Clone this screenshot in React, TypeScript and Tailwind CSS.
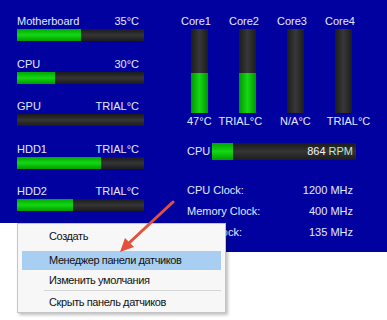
import React from 'react'

const font = { fontFamily: '"Liberation Sans", Arial, sans-serif' }

const sensors = [
  { label: 'Motherboard', value: '35°C', fill: 64 },
  { label: 'CPU', value: '30°C', fill: 38 },
  { label: 'GPU', value: 'TRIAL°C', fill: 0 },
  { label: 'HDD1', value: 'TRIAL°C', fill: 84 },
  { label: 'HDD2', value: 'TRIAL°C', fill: 56 },
]

const cores = [
  { label: 'Core1', fill: 40 },
  { label: 'Core2', fill: 40 },
  { label: 'Core3', fill: 0 },
  { label: 'Core4', fill: 0 },
]

const clocks = [
  { label: 'CPU Clock:', value: '1200 MHz' },
  { label: 'Memory Clock:', value: '400 MHz' },
  { label: 'FSB Clock:', value: '135 MHz' },
]

function HBar({ fill, className }: { fill: number; className: string }) {
  return (
    <div className={`relative bg-gradient-to-b from-[#1a1a1a] via-[#353535] to-[#1c1c1c] ${className}`}>
      {fill > 0 && (
        <div className="absolute left-0 top-0 h-full bg-gradient-to-b from-[#00a800] via-[#14d814] to-[#009a00]"
          style={{ width: fill }} />
      )}
    </div>
  )
}

export default function App() {
  return (
    <div className="relative w-[387px] h-[320px] bg-white overflow-hidden" style={font}>
      {/* gadget panel */}
      <div className="h-[252px] bg-[#0101a0] flex pl-[17px] pt-[14px] text-[11px] text-[#e2eaff]">
        <div className="w-[127px] flex flex-col gap-[15.5px]">
          {sensors.map(s => (
            <div key={s.label}>
              <div className="flex justify-between h-[14px] leading-[14px] pr-[5px]">
                <span>{s.label}</span>
                <span>{s.value}</span>
              </div>
              <HBar fill={s.fill} className="mt-[1px] h-[12px] w-[127px]" />
            </div>
          ))}
        </div>

        <div className="ml-[30px] w-[192px]">
          <div className="grid grid-cols-4">
            {cores.map(c => (
              <div key={c.label} className="flex flex-col items-center">
                <span className="h-[14px] leading-[14px] -ml-[4px]">{c.label}</span>
                <div className="relative mt-[1px] ml-[3px] w-[17px] h-[84px] bg-gradient-to-r from-[#1c1c1c] via-[#383838] to-[#1c1c1c]">
                  {c.fill > 0 && (
                    <div className="absolute bottom-0 left-0 w-full bg-gradient-to-r from-[#009800] via-[#16d816] to-[#009800]"
                      style={{ height: c.fill }} />
                  )}
                </div>
              </div>
            ))}
          </div>
          <div className="flex h-[14px] leading-[14px] mt-[1px] pl-[13px]">
            <span>47°C</span>
            <span className="ml-[7px]">TRIAL°C</span>
            <span className="ml-[18px]">N/A°C</span>
            <span className="ml-[16px]">TRIAL°C</span>
          </div>

          <div className="flex items-center mt-[15px] pl-[13px] h-[17px]">
            <span className="w-[25px]">CPU</span>
            <div className="relative w-[144px] h-[17px] bg-gradient-to-b from-[#1a1a1a] via-[#353535] to-[#1c1c1c]">
              <div className="absolute left-0 top-0 h-full w-[21px] bg-gradient-to-b from-[#00a800] via-[#14d814] to-[#009a00]" />
              <div className="absolute right-[3px] top-0 h-full flex items-center">
                <span className="text-[#f0f4ff]">864</span>
                <span className="ml-[3px] text-[#bfe8cf]">RPM</span>
              </div>
            </div>
          </div>

          <div className="mt-[19.5px] ml-[13px] w-[166px]">
            {clocks.map(c => (
              <div key={c.label} className="flex justify-between h-[21px] leading-[21px]">
                <span>{c.label}</span>
                <span>{c.value}</span>
              </div>
            ))}
          </div>
        </div>
      </div>

      {/* context menu */}
      <div className="absolute left-0 top-[223px] w-[18px] h-[30px] bg-white" />
      <div className="absolute left-[17px] top-[223px] w-[209px] h-[90px] bg-[#f7f7f7] border border-[#c4c4c4] shadow-[2px_2px_3px_rgba(0,0,0,0.25)] pt-[1px] px-[4px] text-[11px] tracking-[-0.4px] text-[#111]">
        <div className="h-[22px] leading-[22px] pl-[27px]">Создать</div>
        <div className="mt-[4px] h-[19px] leading-[19px] pl-[27px] bg-[#a8cff1]">Менеджер панели датчиков</div>
        <div className="h-[20px] leading-[20px] pl-[27px]">Изменить умолчания</div>
        <div className="ml-[22px] h-px bg-[#d6d6d6]" />
        <div className="mt-[1px] h-[20px] leading-[20px] pl-[27px]">Скрыть панель датчиков</div>
      </div>

      {/* red pointer arrow */}
      <svg className="absolute left-0 top-0" width="387" height="320" viewBox="0 0 387 320">
        <line x1="173" y1="202" x2="129" y2="243" stroke="#e3503c" strokeWidth="3" strokeLinecap="round" />
        <polygon points="120,252 125,238 134,247" fill="#e3503c" />
      </svg>
    </div>
  )
}
